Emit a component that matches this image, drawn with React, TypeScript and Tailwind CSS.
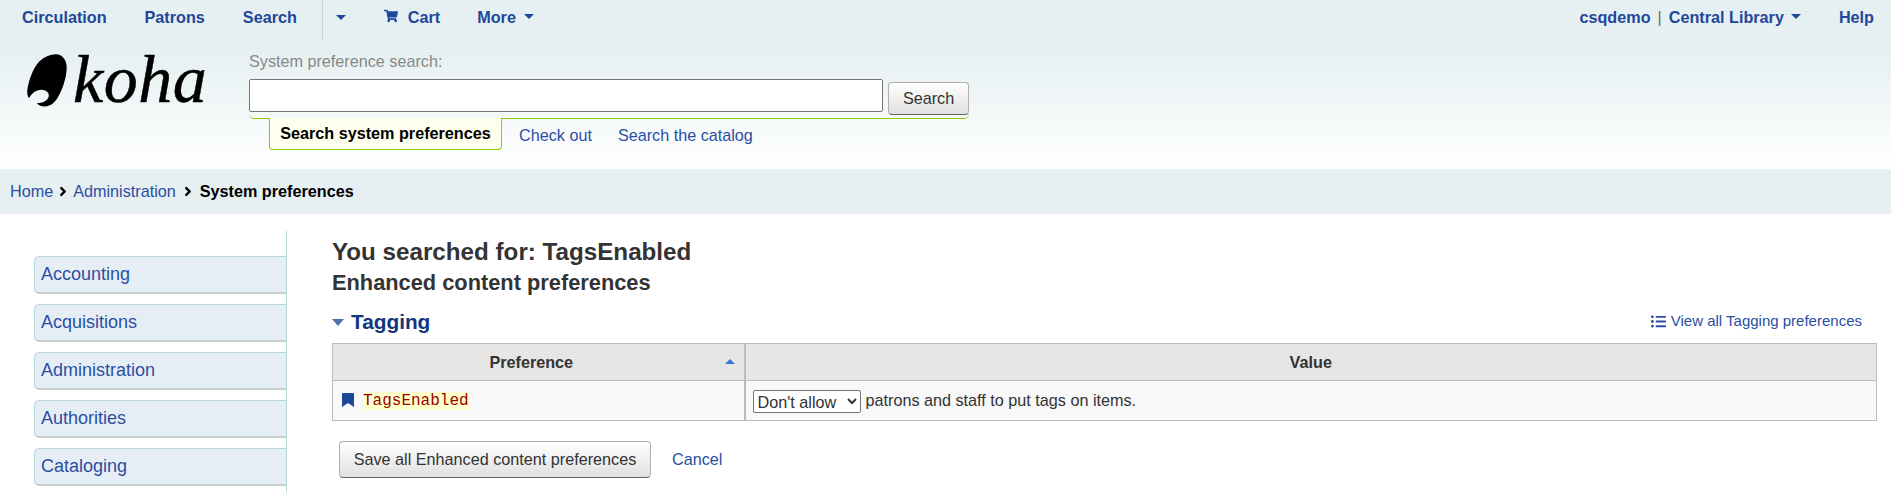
import { FaAngleRight, FaListUl, FaShoppingCart } from "react-icons/fa";

const navLeft = ["Circulation", "Patrons", "Search"];
const sections = ["Accounting", "Acquisitions", "Administration", "Authorities", "Cataloging"];

function Caret({ className }: { className: string }) {
  return <span className={`inline-block w-0 h-0 border-x-[5px] border-x-transparent border-t-[5px] ${className}`}></span>;
}

function Logo() {
  return (
    <div className="w-[222px] pl-[26px] flex items-start h-[54px]">
      <svg width="42" height="54" viewBox="0 0 42 54" className="shrink-0">
        <path
          d="M29.700 1.300C36 1 41 7 40.700 15C40.500 25 36 38 31.300 45.300C28 50 25 53 19 53.500C15 53.500 12 52 11 50C15 50.500 19 49 21.500 46C24 43 23 39 19 37.500C14 35.500 7 38 3 45.300C1.500 43 1 40 1.300 37C2.500 28 7 15 13 8.700C18 4 24 1.500 29.700 1.300Z"
          fill="#000"
        />
      </svg>
      <span className="font-['Liberation_Serif',serif] italic text-[68px] leading-[64px] tracking-[0.5px] [-webkit-text-stroke:0.5px_#000] text-black ml-[5px] -mt-[6px]">
        koha
      </span>
    </div>
  );
}

export default function App() {
  return (
    <div className="w-[1891px] h-[492px] overflow-hidden bg-white font-['Liberation_Sans',Arial,sans-serif] text-[16.2px]">
      {/* HEADER */}
      <div className="h-[169px] bg-gradient-to-b from-[#e6f0f2] from-[30%] to-white">
        <div className="h-[40px] flex justify-between text-[#1f4799] font-bold">
          <div className="flex items-start">
            <div className="flex gap-[38px] pl-[22px] pt-[5px]">
              {navLeft.map((item) => (
                <a key={item}>{item}</a>
              ))}
            </div>
            <div className="ml-[25px] h-[40px] w-[1px] bg-[#c3d2d6]"></div>
            <div className="pl-[13px] pt-[15px] w-[61px] flex">
              <Caret className="border-t-[#1f4799]" />
            </div>
            <div className="pt-[5px] flex items-start">
              <FaShoppingCart className="mt-[4px] w-[14px] h-[14px]" />
              <span className="ml-[10px]">Cart</span>
            </div>
            <div className="pl-[37px] pt-[5px] flex items-start">
              More
              <Caret className="ml-[8px] mt-[9px] border-t-[#1f4799]" />
            </div>
          </div>
          <div className="flex items-start pt-[5px] pr-[17px]">
            <span>csqdemo</span>
            <span className="mx-[7px] font-normal text-[#7a6a4f]">|</span>
            <span>Central Library</span>
            <Caret className="ml-[7px] mt-[9px] border-t-[#1f4799]" />
            <span className="ml-[38px]">Help</span>
          </div>
        </div>
        <div className="flex mt-[13px]">
          <Logo />
          <div className="pl-[27px]">
            <div className="text-[#888] leading-[18px] -mt-[1px]">System preference search:</div>
            <div className="mt-[9px] w-[720px] h-[40px] flex items-start border-b border-[#8ccc00] rounded-b-[5px]">
              <div className="w-[635px] h-[33px] bg-white border border-[#767676] rounded-[2px]"></div>
              <button className="ml-[5px] mt-[3px] w-[81px] h-[33px] text-[#333] border border-[#b0b0b0] border-b-[#666] rounded-[4px] bg-gradient-to-b from-white to-[#e0e0e0]">
                Search
              </button>
            </div>
            <div className="flex items-start">
              <div className="ml-[20px] -mt-[1px] h-[32px] w-[233px] bg-[#ffffee] border border-t-0 border-[#8ccc00] rounded-b-[4px] flex items-center justify-center font-bold text-black pb-[1px]">
                Search system preferences
              </div>
              <a className="ml-[17px] mt-[4px] text-[#2b4ea3]">Check out</a>
              <a className="ml-[26px] mt-[4px] text-[#2b4ea3]">Search the catalog</a>
            </div>
          </div>
        </div>
      </div>

      {/* BREADCRUMB */}
      <div className="h-[45px] bg-[#e6eff2] flex items-center pl-[10px] text-[#2b4ea3]">
        <a>Home</a>
        <FaAngleRight className="mx-[4px] w-[12px] h-[15px] text-black" />
        <a>Administration</a>
        <FaAngleRight className="mx-[6px] w-[12px] h-[15px] text-black" />
        <span className="font-bold text-black">System preferences</span>
      </div>

      {/* BODY */}
      <div className="flex pt-[17px]">
        {/* SIDE NAV */}
        <div className="w-[287px] h-[300px] pl-[34px] pt-[25px] border-r border-[#b9d8d9] flex flex-col gap-[10px] shrink-0">
          {sections.map((section) => (
            <a
              key={section}
              className="block h-[38px] bg-[#e6eef5] border border-r-0 border-[#b9d8d9] border-b-2 border-b-[#c4d0d3] rounded-l-[5px] pl-[6px] pt-[6px] text-[18px] leading-[22px] text-[#2b4ea3]"
            >
              {section}
            </a>
          ))}
        </div>

        {/* MAIN */}
        <div className="pl-[45px] w-[1590px] text-[#333]">
          <h1 className="font-bold text-[24.200px] leading-[28px] mt-[7px]">You searched for: TagsEnabled</h1>
          <h2 className="font-bold text-[21.800px] leading-[24px] mt-[5px]">Enhanced content preferences</h2>
          <div className="flex justify-between items-center mt-[11px] h-[32px] pr-[15px]">
            <div className="flex items-center">
              <span className="w-0 h-0 border-x-[6.500px] border-x-transparent border-t-[7px] border-t-[#4f6fa8]"></span>
              <span className="ml-[7px] font-bold text-[20.800px] text-[#12357f]">Tagging</span>
            </div>
            <a className="flex items-center text-[#2b4ea3] text-[15px] mb-[2px]">
              <FaListUl className="w-[15px] h-[15px] mr-[5px]" />
              View all Tagging preferences
            </a>
          </div>

          <table className="mt-[5px] w-[1545px] border-collapse">
            <thead>
              <tr className="h-[37px] bg-[#e6e6e6]">
                <th className="relative w-[412px] border border-[#bcbcbc] border-r-2 font-bold pr-[14px]">
                  Preference
                  <span className="absolute right-[9px] top-[15px] w-0 h-0 border-x-[5px] border-x-transparent border-b-[5px] border-b-[#3d72d7]"></span>
                </th>
                <th className="border border-[#bcbcbc] font-bold">Value</th>
              </tr>
            </thead>
            <tbody>
              <tr className="h-[40px] bg-[#f8f8f8]">
                <td className="border border-[#bcbcbc] border-r-2 pl-[9px]">
                  <div className="flex items-center">
                    <svg width="12" height="14" viewBox="0 0 12 14" className="-mt-[2px]">
                      <path d="M1 0h10a1 1 0 0 1 1 1v13l-6-4-6 4V1a1 1 0 0 1 1-1z" fill="#1f4799" />
                    </svg>
                    <code className="ml-[9px] bg-[#ffffcc] text-[#990000] font-['Liberation_Mono',monospace] text-[16px] leading-[18px]">
                      TagsEnabled
                    </code>
                  </div>
                </td>
                <td className="border border-[#bcbcbc] pl-[7px]">
                  <select
                    defaultValue="no"
                    className="appearance-auto w-[108px] h-[23px] bg-white border border-[#767676] rounded-[2px] text-[#333] mr-[5px] align-middle"
                  >
                    <option value="no">Don't allow</option>
                  </select>
                  patrons and staff to put tags on items.
                </td>
              </tr>
            </tbody>
          </table>

          <div className="flex mt-[20px] ml-[7px]">
            <button className="w-[312px] h-[37px] text-[#333] border border-[#b0b0b0] border-b-[#666] rounded-[4px] bg-gradient-to-b from-white to-[#e0e0e0]">
              Save all Enhanced content preferences
            </button>
            <a className="ml-[21px] mt-[6px] text-[#2b4ea3]">Cancel</a>
          </div>
        </div>
      </div>
    </div>
  );
}
